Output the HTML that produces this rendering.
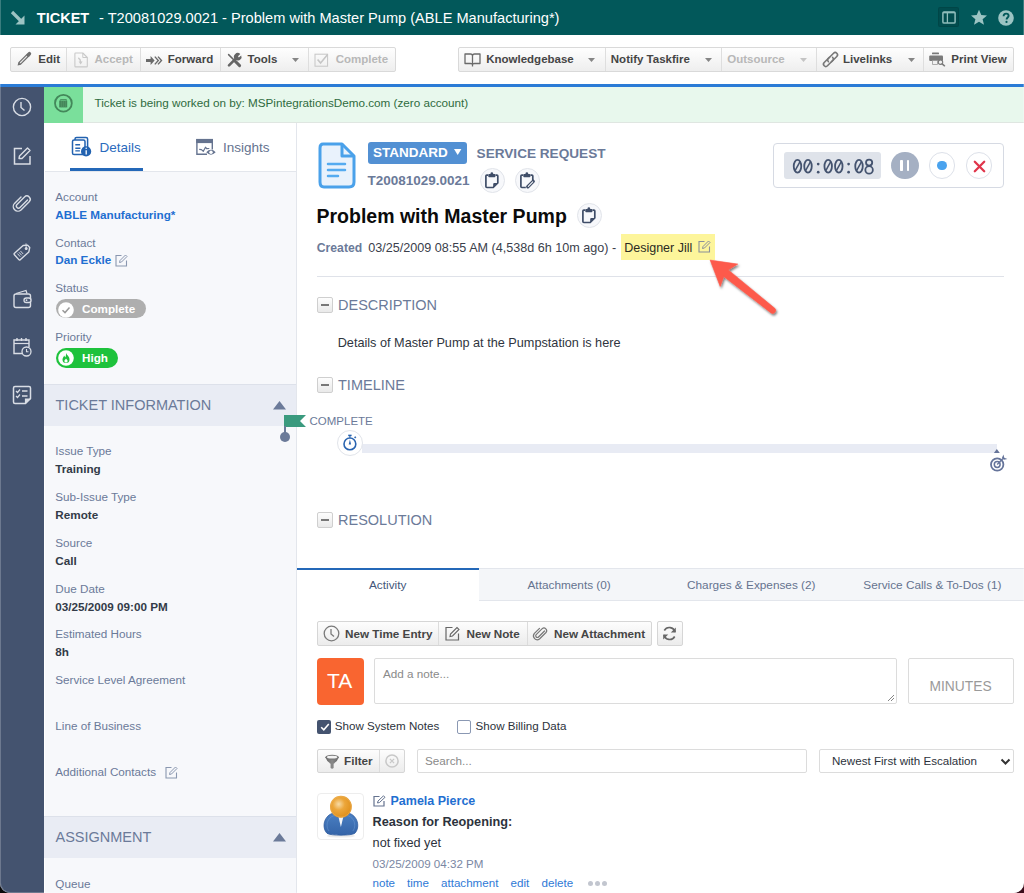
<!DOCTYPE html><html><head><meta charset="utf-8"><style>
html,body{margin:0;padding:0;width:1024px;height:893px;overflow:hidden;background:#0a0a0a;}
.a{position:absolute;}
.t{position:absolute;white-space:nowrap;line-height:1;font-family:"Liberation Sans",sans-serif;}
svg.a{overflow:visible;}
</style></head><body>
<div class="a" style="left:0px;top:0px;width:1024px;height:893px;background:linear-gradient(90deg,#0a0a0a 0%,#0a0a0a 90%,#3a0c1a 100%);"></div>
<div class="a" style="left:0;top:0;width:1024px;height:893px;background:#fff;border-radius:0 0 10px 10px;overflow:hidden;" id="win">
<div class="a" style="left:0px;top:0px;width:1024px;height:35px;background:#02585a;"></div>
<svg class="a" style="left:9px;top:9px;" width="18" height="18" viewBox="0 0 18 18"><path d="M3 3 L13 13" stroke="#9cc4c3" stroke-width="3.2" fill="none"/><path d="M15.5 6.5 L15.5 15.5 L6.5 15.5 Z" fill="#9cc4c3"/></svg>
<div class="t" style="left:36.8px;top:11.00px;font-size:14.5px;font-weight:bold;color:#fff;">TICKET</div>
<div class="t" style="left:99.0px;top:11.00px;font-size:14.6px;color:#fff;">- T20081029.0021 - Problem with Master Pump (ABLE Manufacturing*)</div>
<div class="a" style="left:938.4px;top:7.3px;width:21.1px;height:20.2px;background:#014c4e;border-radius:2px;box-shadow:inset 0 0 0 1px rgba(0,0,0,0.08);"></div>
<svg class="a" style="left:942px;top:11.3px;" width="14" height="13" viewBox="0 0 14 13"><rect x="0.9" y="0.9" width="12.2" height="11.2" rx="1.2" stroke="#8fbcbb" stroke-width="1.5" fill="none"/><path d="M0.9 1.6 L13.1 1.6" stroke="#8fbcbb" stroke-width="1.5"/><path d="M5.4 1 L5.4 12" stroke="#8fbcbb" stroke-width="1.3"/></svg>
<svg class="a" style="left:970px;top:9px;" width="18" height="17" viewBox="0 0 18 17"><path d="M9 0.8 L11.3 6.1 L17 6.5 L12.6 10.2 L14 15.8 L9 12.8 L4 15.8 L5.4 10.2 L1 6.5 L6.7 6.1 Z" fill="#9cc4c3"/></svg>
<svg class="a" style="left:998px;top:10px;" width="16" height="16" viewBox="0 0 16 16"><circle cx="8" cy="8" r="7.8" fill="#9cc4c3"/><path d="M5.6 6.2 C5.6 4.4 6.8 3.6 8.1 3.6 C9.6 3.6 10.6 4.5 10.6 5.8 C10.6 7.4 8.6 7.6 8.6 9.4" stroke="#02585a" stroke-width="1.9" fill="none"/><circle cx="8.5" cy="11.9" r="1.1" fill="#02585a"/></svg>
<div class="a" style="left:10px;top:47px;width:385.5px;height:24.5px;box-sizing:border-box;border:1px solid #d9d9d9;border-radius:2px;background:linear-gradient(#fefefe,#eeeeee);"></div>
<div class="a" style="left:66px;top:48px;width:1px;height:22.5px;background:#dedede;"></div>
<div class="a" style="left:139.5px;top:48px;width:1px;height:22.5px;background:#dedede;"></div>
<div class="a" style="left:220px;top:48px;width:1px;height:22.5px;background:#dedede;"></div>
<div class="a" style="left:307.5px;top:48px;width:1px;height:22.5px;background:#dedede;"></div>
<div class="a" style="left:457.5px;top:47px;width:556.5px;height:24.5px;box-sizing:border-box;border:1px solid #d9d9d9;border-radius:2px;background:linear-gradient(#fefefe,#eeeeee);"></div>
<div class="a" style="left:604.5px;top:48px;width:1px;height:22.5px;background:#dedede;"></div>
<div class="a" style="left:721px;top:48px;width:1px;height:22.5px;background:#dedede;"></div>
<div class="a" style="left:816px;top:48px;width:1px;height:22.5px;background:#dedede;"></div>
<div class="a" style="left:923px;top:48px;width:1px;height:22.5px;background:#dedede;"></div>
<div class="t" style="left:38.3px;top:54.00px;font-size:11.5px;font-weight:bold;color:#454545;">Edit</div>
<div class="t" style="left:94.5px;top:54.00px;font-size:11.5px;font-weight:bold;color:#b8b8b8;">Accept</div>
<div class="t" style="left:167.8px;top:54.00px;font-size:11.5px;font-weight:bold;color:#454545;">Forward</div>
<div class="t" style="left:247.6px;top:54.00px;font-size:11.5px;font-weight:bold;color:#454545;">Tools</div>
<div class="t" style="left:335.7px;top:54.00px;font-size:11.5px;font-weight:bold;color:#b8b8b8;">Complete</div>
<div class="t" style="left:486.2px;top:54.00px;font-size:11.5px;font-weight:bold;color:#454545;">Knowledgebase</div>
<div class="t" style="left:610.8px;top:54.00px;font-size:11.5px;font-weight:bold;color:#454545;">Notify Taskfire</div>
<div class="t" style="left:727.2px;top:54.00px;font-size:11.5px;font-weight:bold;color:#b8b8b8;">Outsource</div>
<div class="t" style="left:843.0px;top:54.00px;font-size:11.5px;font-weight:bold;color:#454545;">Livelinks</div>
<div class="t" style="left:951.3px;top:54.00px;font-size:11.5px;font-weight:bold;color:#454545;">Print View</div>
<svg class="a" style="left:292.1px;top:57.6px;" width="7" height="4" viewBox="0 0 7 4"><path d="M0 0 L7 0 L3.5 4 Z" fill="#858585"/></svg>
<svg class="a" style="left:588.4px;top:57.6px;" width="7" height="4" viewBox="0 0 7 4"><path d="M0 0 L7 0 L3.5 4 Z" fill="#858585"/></svg>
<svg class="a" style="left:705.4px;top:57.6px;" width="7" height="4" viewBox="0 0 7 4"><path d="M0 0 L7 0 L3.5 4 Z" fill="#858585"/></svg>
<svg class="a" style="left:799.9px;top:57.6px;" width="7" height="4" viewBox="0 0 7 4"><path d="M0 0 L7 0 L3.5 4 Z" fill="#c4c4c4"/></svg>
<svg class="a" style="left:907.5px;top:57.6px;" width="7" height="4" viewBox="0 0 7 4"><path d="M0 0 L7 0 L3.5 4 Z" fill="#858585"/></svg>
<svg class="a" style="left:17px;top:52px;" width="15" height="15" viewBox="0 0 15 15"><path d="M2.6 11.5 L11.4 2.7" stroke="#6e6e6e" stroke-width="3.5"/><path d="M3.1 11 L10.9 3.2" stroke="#e9e9e9" stroke-width="1.1"/><path d="M0.6 13.6 L1.4 10 L4.2 12.8 Z" fill="#6e6e6e"/><path d="M11.2 2.9 L12.4 1.7" stroke="#6e6e6e" stroke-width="3.6" stroke-linecap="round"/></svg>
<svg class="a" style="left:74px;top:51.5px;" width="14" height="16" viewBox="0 0 14 16"><path d="M1.6 1 L8.8 1 L13.3 5.5 L13.3 14.2 Q13.3 14.9 12.6 14.9 L1.6 14.9 Q0.9 14.9 0.9 14.2 L0.9 1.7 Q0.9 1 1.6 1 Z" stroke="#c9c9c9" stroke-width="1.1" fill="none" stroke-linejoin="round"/><path d="M8.8 1 L8.8 5.5 L13.3 5.5" stroke="#c9c9c9" stroke-width="1" fill="none"/><path d="M4.3 5.8 Q6.6 7 6.6 10" stroke="#c9c9c9" stroke-width="1.4" fill="none"/><path d="M4.6 9.4 L8.6 9.4 L6.6 12.4 Z" fill="#c9c9c9"/></svg>
<svg class="a" style="left:146px;top:56px;" width="16" height="9" viewBox="0 0 16 9"><path d="M0 3 L4.6 3 L4.6 0 L8.6 4.5 L4.6 9 L4.6 6 L0 6 Z" fill="#6a6a6a"/><path d="M8.8 0.6 L12.3 4.5 L8.8 8.4 M12 0.6 L15.5 4.5 L12 8.4" stroke="#6a6a6a" stroke-width="1.4" fill="none"/></svg>
<svg class="a" style="left:226.5px;top:52.5px;" width="15" height="14" viewBox="0 0 15 14"><path d="M2 12.3 L8.5 5.8" stroke="#666" stroke-width="2.6" stroke-linecap="round"/><path d="M8.2 6.5 A3.6 3.6 0 0 1 13.3 1 L11 3.2 L11.8 4.4 L14.2 2.4 A3.6 3.6 0 0 1 9.8 7.3 Z" fill="#666"/><path d="M1.6 1.6 L7.2 7.2" stroke="#666" stroke-width="1.5" stroke-linecap="round"/><path d="M7.5 7.5 L12.6 12.6" stroke="#666" stroke-width="3" stroke-linecap="round"/></svg>
<svg class="a" style="left:313.5px;top:52.5px;" width="16" height="14" viewBox="0 0 16 14"><rect x="1" y="1.2" width="12.6" height="12" stroke="#c6c6c6" stroke-width="1" fill="none"/><path d="M3.6 6.4 L6.6 10 L13.6 1.6" stroke="#c6c6c6" stroke-width="1.6" fill="none"/></svg>
<svg class="a" style="left:464px;top:52.5px;" width="17" height="14" viewBox="0 0 17 14"><path d="M1 1 L6.5 1 Q8.5 1 8.5 3 L8.5 11.5 Q8.5 10.5 6.5 10.5 L1 10.5 Z M16 1 L10.5 1 Q8.5 1 8.5 3 L8.5 11.5 Q8.5 10.5 10.5 10.5 L16 10.5 Z" stroke="#6a6a6a" stroke-width="1.3" fill="none" stroke-linejoin="round"/><path d="M8.5 11.5 L8.5 13.5" stroke="#6a6a6a" stroke-width="1.3"/></svg>
<svg class="a" style="left:822.5px;top:51.5px;" width="15" height="15" viewBox="0 0 15 15"><g transform="translate(7.5,7.5) rotate(-45)"><path d="M0.8 -2.3 L-6.6 -2.3 A2.3 2.3 0 0 0 -6.6 2.3 L1.4 2.3 A2.3 2.3 0 0 0 3 0" stroke="#777" stroke-width="1.6" fill="none" stroke-linecap="round"/><path d="M-0.8 2.3 L6.6 2.3 A2.3 2.3 0 0 0 6.6 -2.3 L-1.4 -2.3 A2.3 2.3 0 0 0 -3 0" stroke="#777" stroke-width="1.6" fill="none" stroke-linecap="round"/></g></svg>
<svg class="a" style="left:929px;top:51px;" width="17" height="16" viewBox="0 0 17 16"><rect x="3" y="1.5" width="7" height="1.8" rx="0.6" fill="#7a7a7a"/><rect x="0.2" y="4.6" width="13.8" height="5.4" rx="1" fill="#7a7a7a"/><rect x="3.6" y="9.6" width="4.8" height="3.8" fill="#f0f0f0" stroke="#9a9a9a" stroke-width="0.8"/><circle cx="11.5" cy="11.2" r="2.2" stroke="#7a7a7a" stroke-width="1.1" fill="#f0f0f0"/><path d="M13.1 12.8 L15.5 14.8" stroke="#7a7a7a" stroke-width="1.5" stroke-linecap="round"/></svg>
<div class="a" style="left:0px;top:84px;width:1024px;height:3px;background:#2a7bd6;"></div>
<div class="a" style="left:0px;top:87px;width:44px;height:806px;background:#44536f;"></div>
<svg class="a" style="left:12px;top:97px;" width="20" height="20" viewBox="0 0 20 20"><circle cx="10" cy="10" r="8.6" stroke="#d9dde5" stroke-width="1.4" fill="none"/><path d="M9 5 L9 10.5 L12.5 13.5" stroke="#d9dde5" stroke-width="1.4" fill="none"/></svg>
<svg class="a" style="left:12px;top:146px;" width="20" height="20" viewBox="0 0 20 20"><path d="M10 2.5 L2.5 2.5 L2.5 18 L18 18 L18 10" stroke="#d9dde5" stroke-width="1.5" fill="none"/><path d="M7 12.5 L7.5 10 L15.5 2 L18 4.5 L10 12.5 Z" stroke="#d9dde5" stroke-width="1.4" fill="none" stroke-linejoin="round"/></svg>
<svg class="a" style="left:12px;top:194px;" width="20" height="20" viewBox="0 0 20 20"><path d="M15.5 6 L8 13.5 A2 2 0 0 1 5 10.5 L12.5 3 A3.3 3.3 0 0 1 17.2 7.7 L9 15.9 A4.6 4.6 0 0 1 2.5 9.4 L9 3" stroke="#d9dde5" stroke-width="1.4" fill="none" stroke-linecap="round"/></svg>
<svg class="a" style="left:12px;top:242px;" width="20" height="20" viewBox="0 0 20 20"><g transform="translate(11,9.4) rotate(-42)"><path d="M-7.6 -4.3 Q-8.6 -4.3 -8.6 -3.3 L-8.6 3.3 Q-8.6 4.3 -7.6 4.3 L4 4.3 L7.6 1.6 L7.6 -1.6 L4 -4.3 Z" stroke="#d9dde5" stroke-width="1.4" fill="none" stroke-linejoin="round"/><circle cx="4.3" cy="0" r="1.5" fill="#d9dde5"/><path d="M-5.6 -2.1 L-5.6 2.1 M-3.6 -2.1 L-3.6 2.1 M-1.6 -2.1 L-1.6 2.1" stroke="#d9dde5" stroke-width="0.9"/></g><path d="M14.2 6.5 L14 1.4" stroke="#d9dde5" stroke-width="0.9"/></svg>
<svg class="a" style="left:12px;top:289px;" width="20" height="20" viewBox="0 0 20 20"><rect x="2" y="5" width="16.5" height="13.5" rx="2" stroke="#d9dde5" stroke-width="1.4" fill="none"/><path d="M4 4.5 L14 1.5 L15 4.5" stroke="#d9dde5" stroke-width="1.3" fill="none"/><rect x="12" y="9" width="7" height="4.5" rx="2.2" stroke="#d9dde5" stroke-width="1.3" fill="#44536f"/><circle cx="14.5" cy="11.2" r="0.9" fill="#d9dde5"/></svg>
<svg class="a" style="left:12px;top:337px;" width="20" height="20" viewBox="0 0 20 20"><path d="M11 16.5 L2 16.5 L2 3 L17 3 L17 10" stroke="#d9dde5" stroke-width="1.4" fill="none"/><path d="M2 6.5 L17 6.5" stroke="#d9dde5" stroke-width="1.2"/><path d="M5 1 L5 4 M9.5 1 L9.5 4 M14 1 L14 4" stroke="#d9dde5" stroke-width="1.4"/><circle cx="14.5" cy="14.5" r="4.5" stroke="#d9dde5" stroke-width="1.3" fill="#44536f"/><path d="M14.5 12 L14.5 14.7 L16.5 14.7" stroke="#d9dde5" stroke-width="1.1" fill="none"/></svg>
<svg class="a" style="left:12px;top:385px;" width="20" height="20" viewBox="0 0 20 20"><path d="M3 1.5 L17 1.5 Q18.5 1.5 18.5 3 L18.5 13.5 L13.5 18.5 L3 18.5 Q1.5 18.5 1.5 17 L1.5 3 Q1.5 1.5 3 1.5 Z" stroke="#d9dde5" stroke-width="1.5" fill="none"/><path d="M13.5 18.5 L13.5 14 L18.5 14" stroke="#d9dde5" stroke-width="1.2" fill="#d9dde5"/><path d="M4 6 L5.5 7.5 L8 4.5 M4 11 L5.5 12.5 L8 9.5" stroke="#d9dde5" stroke-width="1.2" fill="none"/><path d="M10 6 L15.5 6 M10 11 L15.5 11" stroke="#d9dde5" stroke-width="1.4"/></svg>
<div class="a" style="left:44px;top:87px;width:980px;height:36px;background:#e8f8ed;border-bottom:1px solid #dfe6e1;box-sizing:border-box;"></div>
<div class="a" style="left:44px;top:87px;width:39px;height:36px;background:#7adf9b;"></div>
<svg class="a" style="left:53px;top:93px;" width="21" height="21" viewBox="0 0 21 21"><circle cx="10.4" cy="10.2" r="8.4" stroke="#43875a" stroke-width="1.8" fill="none"/><rect x="6.2" y="7.6" width="8" height="6.8" fill="#43875a"/><path d="M8.6 7.6 L8.6 14.4 M10.6 7.6 L10.6 14.4 M12.4 7.6 L12.4 14.4" stroke="#5d9f72" stroke-width="0.45"/><path d="M7.4 7.6 L7.4 6.6 L13.4 6.6 L13.4 7.6" stroke="#43875a" stroke-width="0.9" fill="none"/></svg>
<div class="t" style="left:94.5px;top:97.00px;font-size:11.7px;color:#2f6b40;">Ticket is being worked on by: MSPintegrationsDemo.com (zero account)</div>
<div class="a" style="left:44px;top:123px;width:252px;height:770px;background:#f7f8fb;border-right:1px solid #e3e6ec;box-sizing:content-box;"></div>
<div class="a" style="left:44px;top:123px;width:252px;height:48px;background:#fff;border-bottom:1px solid #e3e6ec;"></div>
<div class="a" style="left:70px;top:168px;width:73px;height:3px;background:#2468b8;"></div>
<svg class="a" style="left:71px;top:136px;" width="21" height="21" viewBox="0 0 21 21"><rect x="4" y="1.5" width="12.6" height="12" rx="1.6" stroke="#2262b0" stroke-width="1.5" fill="#fff"/><rect x="1.5" y="4" width="12.5" height="14.6" rx="1.6" stroke="#2262b0" stroke-width="1.5" fill="#fff"/><path d="M4.3 8.8 L9.1 8.8 M4.3 12.2 L9.4 12.2 M4.3 14.9 L8.9 14.9" stroke="#2262b0" stroke-width="1.4"/><circle cx="15.1" cy="15.4" r="5.1" fill="#2262b0"/><path d="M15.2 14.3 L15.2 18.5" stroke="#fff" stroke-width="1.3"/><circle cx="15.2" cy="12.3" r="0.75" fill="#fff"/></svg>
<div class="t" style="left:99.5px;top:141.00px;font-size:13.5px;color:#2a6bbd;">Details</div>
<svg class="a" style="left:196px;top:138px;" width="21" height="19" viewBox="0 0 21 19"><rect x="0.2" y="0.9" width="16.8" height="4.2" fill="#65738f"/><path d="M0.9 1 L0.9 16.2 L11 16.2 M16.3 1 L16.3 11.6" stroke="#65738f" stroke-width="1.4" fill="none"/><path d="M3.2 11.4 L5.4 11.6 L7.3 13.3 L9.5 9.2 L10.6 10.6 L13.3 10.5" stroke="#65738f" stroke-width="1.2" fill="none" stroke-linejoin="round"/><path d="M10.2 14.2 Q15 9.3 19.7 14.2 Q15 19.1 10.2 14.2 Z" fill="#65738f"/><circle cx="15" cy="14.2" r="1.7" fill="#fff"/></svg>
<div class="t" style="left:223.0px;top:141.00px;font-size:13.5px;color:#65738f;">Insights</div>
<div class="a" style="left:44px;top:171px;width:1px;height:722px;background:#fff;"></div>
<div class="t" style="left:55.3px;top:191.00px;font-size:11.7px;color:#6b7a99;">Account</div>
<div class="t" style="left:55.3px;top:209.00px;font-size:11.7px;font-weight:bold;color:#1f6fd1;">ABLE Manufacturing*</div>
<div class="t" style="left:55.3px;top:237.00px;font-size:11.7px;color:#6b7a99;">Contact</div>
<div class="t" style="left:55.3px;top:254.00px;font-size:11.7px;font-weight:bold;color:#1f6fd1;">Dan Eckle</div>
<svg class="a" style="left:115px;top:254px;" width="13" height="13" viewBox="0 0 13 13"><path d="M6.5 1.5 L1 1.5 L1 12 L11.5 12 L11.5 6.5" stroke="#8a97b0" stroke-width="1.1" fill="none"/><path d="M4.5 8.5 L5 6.5 L10.5 1 L12 2.5 L6.5 8 Z" stroke="#8a97b0" stroke-width="1" fill="none"/></svg>
<div class="t" style="left:55.3px;top:282.00px;font-size:11.7px;color:#6b7a99;">Status</div>
<div class="a" style="left:55.5px;top:299.2px;width:90px;height:19.3px;background:#aeaeae;border-radius:10px;"></div>
<svg class="a" style="left:57.5px;top:301.5px;" width="16" height="16" viewBox="0 0 16 16"><circle cx="8" cy="8" r="7.8" fill="#fff"/><path d="M4.5 8.2 L7 10.6 L11.5 5.6" stroke="#9a9a9a" stroke-width="1.5" fill="none"/></svg>
<div class="t" style="left:82.0px;top:303.00px;font-size:11.7px;font-weight:bold;color:#fff;">Complete</div>
<div class="t" style="left:55.3px;top:331.00px;font-size:11.7px;color:#6b7a99;">Priority</div>
<div class="a" style="left:55.5px;top:348px;width:62.5px;height:19.5px;background:#1ec23c;border-radius:10px;"></div>
<svg class="a" style="left:57.5px;top:350px;" width="16" height="16" viewBox="0 0 16 16"><circle cx="8" cy="8" r="7.8" fill="#fff"/><path d="M8 3 C9 5.5 11.5 6.5 11.5 9.5 A3.5 3.5 0 0 1 4.5 9.5 C4.5 7.5 6 7 6 5.5 C7 6.5 7 7 7.3 7.5 C8 6 8 4.5 8 3 Z" fill="#1ec23c"/><path d="M8 8.5 C8.7 9.5 9.6 10 9.6 11 A1.6 1.6 0 0 1 6.4 11 C6.4 10 7.5 9.5 8 8.5 Z" fill="#fff"/></svg>
<div class="t" style="left:82.0px;top:352.00px;font-size:11.7px;font-weight:bold;color:#fff;">High</div>
<div class="a" style="left:44px;top:384px;width:252px;height:42px;background:#e9ecf4;border-top:1px solid #dde1ea;box-sizing:border-box;"></div>
<div class="t" style="left:55.5px;top:398.00px;font-size:14.5px;color:#6b7a99;">TICKET INFORMATION</div>
<svg class="a" style="left:273px;top:401px;" width="13" height="9" viewBox="0 0 13 9"><path d="M0 8.5 L6.5 0 L13 8.5 Z" fill="#6b7a99"/></svg>
<div class="t" style="left:55.3px;top:445.00px;font-size:11.7px;color:#6b7a99;">Issue Type</div>
<div class="t" style="left:55.3px;top:463.00px;font-size:11.7px;font-weight:bold;color:#333b48;">Training</div>
<div class="t" style="left:55.3px;top:491.00px;font-size:11.7px;color:#6b7a99;">Sub-Issue Type</div>
<div class="t" style="left:55.3px;top:509.00px;font-size:11.7px;font-weight:bold;color:#333b48;">Remote</div>
<div class="t" style="left:55.3px;top:537.00px;font-size:11.7px;color:#6b7a99;">Source</div>
<div class="t" style="left:55.3px;top:555.00px;font-size:11.7px;font-weight:bold;color:#333b48;">Call</div>
<div class="t" style="left:55.3px;top:583.00px;font-size:11.7px;color:#6b7a99;">Due Date</div>
<div class="t" style="left:55.3px;top:601.00px;font-size:11.7px;font-weight:bold;color:#333b48;">03/25/2009 09:00 PM</div>
<div class="t" style="left:55.3px;top:628.00px;font-size:11.7px;color:#6b7a99;">Estimated Hours</div>
<div class="t" style="left:55.3px;top:646.00px;font-size:11.7px;font-weight:bold;color:#333b48;">8h</div>
<div class="t" style="left:55.3px;top:674.00px;font-size:11.7px;color:#6b7a99;">Service Level Agreement</div>
<div class="t" style="left:55.3px;top:720.00px;font-size:11.7px;color:#6b7a99;">Line of Business</div>
<div class="t" style="left:55.3px;top:766.00px;font-size:11.7px;color:#6b7a99;">Additional Contacts</div>
<svg class="a" style="left:165px;top:766px;" width="13" height="13" viewBox="0 0 13 13"><path d="M6.5 1.5 L1 1.5 L1 12 L11.5 12 L11.5 6.5" stroke="#8a97b0" stroke-width="1.1" fill="none"/><path d="M4.5 8.5 L5 6.5 L10.5 1 L12 2.5 L6.5 8 Z" stroke="#8a97b0" stroke-width="1" fill="none"/></svg>
<div class="a" style="left:44px;top:816px;width:252px;height:42px;background:#e9ecf4;border-top:1px solid #dde1ea;box-sizing:border-box;"></div>
<div class="t" style="left:55.5px;top:830.00px;font-size:14.5px;color:#6b7a99;">ASSIGNMENT</div>
<svg class="a" style="left:273px;top:833px;" width="13" height="9" viewBox="0 0 13 9"><path d="M0 8.5 L6.5 0 L13 8.5 Z" fill="#6b7a99"/></svg>
<div class="t" style="left:55.3px;top:878.00px;font-size:11.7px;color:#6b7a99;">Queue</div>
<svg class="a" style="left:318px;top:142px;" width="39" height="47" viewBox="0 0 39 47"><path d="M5 2 L24 2 L36 14 L36 40 Q36 45 31 45 L6 45 Q2 45 2 40 L2 6 Q2 2 5 2 Z" fill="#e9f2fc" stroke="#4aa1ea" stroke-width="3" stroke-linejoin="round"/><path d="M24 2 L24 14 L36 14" fill="none" stroke="#4aa1ea" stroke-width="3" stroke-linejoin="round"/><path d="M10 22 L27 22 M10 28 L27 28 M10 34 L20 34" stroke="#55abf0" stroke-width="2.5" stroke-linecap="round"/></svg>
<div class="a" style="left:367.7px;top:142.3px;width:99.5px;height:21.5px;background:#5290d3;border-radius:3px;"></div>
<div class="t" style="left:373.0px;top:146.00px;font-size:13.5px;font-weight:bold;color:#fff;">STANDARD</div>
<svg class="a" style="left:453.6px;top:148.8px;" width="7.4" height="6" viewBox="0 0 7.4 6"><path d="M0 0 L7.4 0 L3.7 6 Z" fill="#fff"/></svg>
<div class="t" style="left:476.6px;top:147.00px;font-size:13.6px;font-weight:bold;color:#6b7a99;">SERVICE REQUEST</div>
<div class="t" style="left:367.5px;top:174.00px;font-size:13.5px;font-weight:bold;color:#6b7a99;">T20081029.0021</div>
<div class="a" style="left:479.9px;top:167.5px;width:25px;height:25px;box-sizing:border-box;border:1px solid #e1e4ea;border-radius:50%;background:#f7f8fb;"></div>
<svg class="a" style="left:484.0px;top:171.7px;" width="16" height="17" viewBox="0 0 16 17"><path d="M4.2 3.2 L2.8 3.2 Q1.9 3.2 1.9 4.1 L1.9 14.6 Q1.9 15.5 2.8 15.5 L9.2 15.5 L13.8 10.9 L13.8 4.1 Q13.8 3.2 12.9 3.2 L11.5 3.2" stroke="#3f4d68" stroke-width="1.7" fill="none" stroke-linejoin="round"/><rect x="4.3" y="1.9" width="7.1" height="3.3" rx="0.8" fill="#3f4d68"/><circle cx="7.85" cy="1.6" r="1.3" fill="#3f4d68"/><path d="M9.2 15.5 L9.2 12 Q9.2 10.9 10.3 10.9 L13.8 10.9 Z" fill="#3f4d68"/></svg>
<div class="a" style="left:515.0px;top:167.5px;width:25px;height:25px;box-sizing:border-box;border:1px solid #e1e4ea;border-radius:50%;background:#f7f8fb;"></div>
<svg class="a" style="left:519.1px;top:171.7px;" width="16" height="17" viewBox="0 0 16 17"><path d="M4.2 3.2 L2.8 3.2 Q1.9 3.2 1.9 4.1 L1.9 14.6 Q1.9 15.5 2.8 15.5 L6.8 15.5 M13.8 9.6 L13.8 4.1 Q13.8 3.2 12.9 3.2 L11.5 3.2" stroke="#3f4d68" stroke-width="1.7" fill="none" stroke-linejoin="round"/><rect x="4.3" y="1.9" width="7.1" height="3.3" rx="0.8" fill="#3f4d68"/><circle cx="7.85" cy="1.6" r="1.3" fill="#3f4d68"/><path d="M8.8 14.8 L14.2 9.4" stroke="#3f4d68" stroke-width="3.4" stroke-linecap="round"/><path d="M9.3 14.3 L13.7 9.9" stroke="#f7f8fb" stroke-width="1.1" stroke-linecap="round"/></svg>
<div class="a" style="left:576.5px;top:203.0px;width:25px;height:25px;box-sizing:border-box;border:1px solid #e1e4ea;border-radius:50%;background:#f7f8fb;"></div>
<svg class="a" style="left:580.6px;top:207.2px;" width="16" height="17" viewBox="0 0 16 17"><path d="M4.2 3.2 L2.8 3.2 Q1.9 3.2 1.9 4.1 L1.9 14.6 Q1.9 15.5 2.8 15.5 L9.2 15.5 L13.8 10.9 L13.8 4.1 Q13.8 3.2 12.9 3.2 L11.5 3.2" stroke="#3f4d68" stroke-width="1.7" fill="none" stroke-linejoin="round"/><rect x="4.3" y="1.9" width="7.1" height="3.3" rx="0.8" fill="#3f4d68"/><circle cx="7.85" cy="1.6" r="1.3" fill="#3f4d68"/><path d="M9.2 15.5 L9.2 12 Q9.2 10.9 10.3 10.9 L13.8 10.9 Z" fill="#3f4d68"/></svg>
<div class="t" style="left:316.5px;top:207.00px;font-size:19.5px;font-weight:bold;color:#0b0b0b;">Problem with Master Pump</div>
<div class="t" style="left:316.8px;top:242.00px;font-size:12.2px;font-weight:bold;color:#6b7a99;">Created</div>
<div class="t" style="left:368.3px;top:242.00px;font-size:12.6px;color:#3a404b;">03/25/2009 08:55 AM (4,538d 6h 10m ago) -</div>
<div class="a" style="left:621.2px;top:234px;width:93.8px;height:26px;background:#fdf59b;"></div>
<div class="t" style="left:624.2px;top:242.00px;font-size:12.5px;color:#2a2a22;">Designer Jill</div>
<svg class="a" style="left:697.5px;top:239.5px;" width="13" height="13" viewBox="0 0 13 13"><path d="M6.5 1.5 L1 1.5 L1 12 L11.5 12 L11.5 6.5" stroke="#8a8f9a" stroke-width="1.1" fill="none"/><path d="M4.5 8.5 L5 6.5 L10.5 1 L12 2.5 L6.5 8 Z" stroke="#8a8f9a" stroke-width="1" fill="none"/></svg>
<div class="a" style="left:317px;top:276px;width:687px;height:1px;background:#dfe2e9;"></div>
<div class="a" style="left:773.2px;top:142.6px;width:231px;height:45.7px;box-sizing:border-box;border:1.5px solid #d6dae3;border-radius:4px;background:#fff;"></div>
<div class="a" style="left:784px;top:152.3px;width:97.4px;height:26.4px;background:#dfe3ea;border-radius:3px;"></div>
<svg class="a" style="left:786px;top:152px;" width="94" height="28" viewBox="0 0 94 28"><ellipse cx="11.5" cy="14.25" rx="3.75" ry="6.45" stroke="#44536f" stroke-width="1.8" fill="none"/><path d="M9.1 18.6 L13.9 9.9" stroke="#44536f" stroke-width="1.5"/><ellipse cx="22" cy="14.25" rx="3.75" ry="6.45" stroke="#44536f" stroke-width="1.8" fill="none"/><path d="M19.6 18.6 L24.4 9.9" stroke="#44536f" stroke-width="1.5"/><ellipse cx="42.2" cy="14.25" rx="3.75" ry="6.45" stroke="#44536f" stroke-width="1.8" fill="none"/><path d="M39.800000000000004 18.6 L44.6 9.9" stroke="#44536f" stroke-width="1.5"/><ellipse cx="52.8" cy="14.25" rx="3.75" ry="6.45" stroke="#44536f" stroke-width="1.8" fill="none"/><path d="M50.4 18.6 L55.199999999999996 9.9" stroke="#44536f" stroke-width="1.5"/><ellipse cx="73" cy="14.25" rx="3.75" ry="6.45" stroke="#44536f" stroke-width="1.8" fill="none"/><path d="M70.6 18.6 L75.4 9.9" stroke="#44536f" stroke-width="1.5"/><ellipse cx="83.1" cy="10.6" rx="3.1" ry="3.0" stroke="#44536f" stroke-width="1.8" fill="none"/><ellipse cx="83.1" cy="17.9" rx="3.75" ry="3.7" stroke="#44536f" stroke-width="1.8" fill="none"/><circle cx="32.2" cy="12.1" r="1.35" fill="#44536f"/><circle cx="32.2" cy="20.2" r="1.35" fill="#44536f"/><circle cx="62.6" cy="12.1" r="1.35" fill="#44536f"/><circle cx="62.6" cy="20.2" r="1.35" fill="#44536f"/></svg>
<div class="a" style="left:891.3px;top:151.8px;width:27.4px;height:27.4px;background:#a5b0c3;border-radius:50%;"></div>
<div class="a" style="left:900.4px;top:160.2px;width:2.9px;height:10.8px;background:#fff;border-radius:0.8px;"></div>
<div class="a" style="left:906.6px;top:160.2px;width:2.9px;height:10.8px;background:#fff;border-radius:0.8px;"></div>
<div class="a" style="left:928.9px;top:152.2px;width:26.6px;height:26.6px;box-sizing:border-box;border:1.5px solid #dde1e9;border-radius:50%;background:#fff;"></div>
<div class="a" style="left:937.4px;top:160.9px;width:9.2px;height:9.2px;background:#4aa3ee;border-radius:50%;"></div>
<div class="a" style="left:965.7px;top:152.2px;width:26.6px;height:26.6px;box-sizing:border-box;border:1.5px solid #dde1e9;border-radius:50%;background:#fff;"></div>
<svg class="a" style="left:972.5px;top:159.5px;" width="13" height="13" viewBox="0 0 13 13"><path d="M1.8 1.8 L11.2 11.2 M11.2 1.8 L1.8 11.2" stroke="#e0354b" stroke-width="2.3" stroke-linecap="round"/></svg>
<div class="a" style="left:317px;top:297px;width:16px;height:16px;box-sizing:border-box;border:1px solid #cfcfcf;border-radius:2px;background:linear-gradient(#fdfdfd,#e9e9e9);"></div>
<div class="a" style="left:321px;top:304px;width:8px;height:2px;background:#777;"></div>
<div class="t" style="left:338.0px;top:298.00px;font-size:14.5px;color:#6b7a99;">DESCRIPTION</div>
<div class="t" style="left:337.7px;top:337.00px;font-size:12.7px;color:#2f3540;">Details of Master Pump at the Pumpstation is here</div>
<div class="a" style="left:317px;top:377px;width:16px;height:16px;box-sizing:border-box;border:1px solid #cfcfcf;border-radius:2px;background:linear-gradient(#fdfdfd,#e9e9e9);"></div>
<div class="a" style="left:321px;top:384px;width:8px;height:2px;background:#777;"></div>
<div class="t" style="left:338.0px;top:378.00px;font-size:14.5px;color:#6b7a99;">TIMELINE</div>
<div class="a" style="left:317px;top:512px;width:16px;height:16px;box-sizing:border-box;border:1px solid #cfcfcf;border-radius:2px;background:linear-gradient(#fdfdfd,#e9e9e9);"></div>
<div class="a" style="left:321px;top:519px;width:8px;height:2px;background:#777;"></div>
<div class="t" style="left:338.0px;top:513.00px;font-size:14.5px;color:#6b7a99;">RESOLUTION</div>
<svg class="a" style="left:283px;top:414px;" width="24" height="14" viewBox="0 0 24 14"><path d="M1 1 L23 1 L17 7 L23 13 L1 13 Z" fill="#3a9a7e"/></svg>
<div class="a" style="left:284.1px;top:426px;width:1.5px;height:7px;background:#6b7a99;"></div>
<div class="a" style="left:279.8px;top:431.9px;width:9.8px;height:9.8px;background:#6b7a99;border-radius:50%;"></div>
<div class="t" style="left:309.5px;top:416.00px;font-size:11.5px;color:#6b7a99;">COMPLETE</div>
<div class="a" style="left:362px;top:444px;width:635px;height:9px;background:#e8ebf4;"></div>
<div class="a" style="left:336.6px;top:430px;width:26px;height:26px;box-sizing:border-box;border:1px solid #e1e4ea;border-radius:50%;background:#fff;"></div>
<svg class="a" style="left:341.5px;top:433px;" width="16" height="18" viewBox="0 0 16 18"><circle cx="7.9" cy="10.9" r="5.9" stroke="#2a64b0" stroke-width="1.6" fill="none"/><path d="M6.2 2.4 L9.6 2.4" stroke="#2a64b0" stroke-width="1.5"/><path d="M7.9 2.6 L7.9 4.8" stroke="#2a64b0" stroke-width="1.2"/><path d="M12.6 4.9 L13.8 3.7" stroke="#2a64b0" stroke-width="1.6"/><path d="M7.9 6.4 L9.1 11.4 L6.7 11.4 Z" fill="#2a64b0"/></svg>
<svg class="a" style="left:985px;top:445px;" width="24" height="28" viewBox="0 0 24 28"><path d="M11.8 4.1 L14.8 7.9 L8.9 7.9 Z" fill="#65749a"/><circle cx="12.2" cy="19.5" r="6.2" stroke="#65749a" stroke-width="1.8" fill="none"/><circle cx="12.2" cy="19.5" r="2.9" stroke="#65749a" stroke-width="1.5" fill="none"/><path d="M12.2 19.5 L18 13.6" stroke="#65749a" stroke-width="1.4"/><path d="M18.4 9.6 L19.3 12.7 L22.4 13.9 L18.9 14.8 L16.9 12.9 Z" fill="#65749a"/></svg>
<div class="a" style="left:297px;top:568px;width:727px;height:33px;background:#f4f6f9;border-top:1px solid #e3e6ec;border-bottom:1px solid #e3e6ec;box-sizing:border-box;"></div>
<div class="a" style="left:297px;top:568px;width:182px;height:34px;background:#fff;border-top:2px solid #2468b8;box-sizing:border-box;"></div>
<div class="t" style="left:369.0px;top:580.00px;font-size:11.8px;color:#44577a;">Activity</div>
<div class="t" style="left:527.5px;top:580.00px;font-size:11.8px;color:#65738f;">Attachments (0)</div>
<div class="t" style="left:687.0px;top:580.00px;font-size:11.8px;color:#65738f;">Charges &amp; Expenses (2)</div>
<div class="t" style="left:863.3px;top:580.00px;font-size:11.8px;color:#65738f;">Service Calls &amp; To-Dos (1)</div>
<div class="a" style="left:317px;top:621px;width:335px;height:25px;box-sizing:border-box;border:1px solid #d6d6d6;border-radius:2px;background:linear-gradient(#fdfdfd,#ececec);"></div>
<div class="a" style="left:438px;top:622px;width:1px;height:23px;background:#dcdcdc;"></div>
<div class="a" style="left:526.5px;top:622px;width:1px;height:23px;background:#dcdcdc;"></div>
<div class="a" style="left:657.4px;top:621px;width:25.200000000000045px;height:25px;box-sizing:border-box;border:1px solid #d6d6d6;border-radius:2px;background:linear-gradient(#fdfdfd,#ececec);"></div>
<div class="t" style="left:345.0px;top:628.00px;font-size:11.7px;font-weight:bold;color:#454545;">New Time Entry</div>
<div class="t" style="left:466.5px;top:628.00px;font-size:11.7px;font-weight:bold;color:#454545;">New Note</div>
<div class="t" style="left:554.0px;top:628.00px;font-size:11.7px;font-weight:bold;color:#454545;">New Attachment</div>
<svg class="a" style="left:323px;top:625px;" width="17" height="17" viewBox="0 0 17 17"><circle cx="8.5" cy="8.5" r="7.3" stroke="#7a7a7a" stroke-width="1.3" fill="none"/><path d="M8 4 L8 9 L11 11.5" stroke="#7a7a7a" stroke-width="1.3" fill="none"/></svg>
<svg class="a" style="left:445px;top:626px;" width="15" height="15" viewBox="0 0 15 15"><path d="M7.5 1.5 L1 1.5 L1 14 L13.5 14 L13.5 7.5" stroke="#666" stroke-width="1.2" fill="none"/><path d="M5 10.5 L5.5 8 L12 1.5 L14 3.5 L7.5 10 Z" stroke="#666" stroke-width="1.1" fill="none"/></svg>
<svg class="a" style="left:533px;top:626px;" width="15" height="16" viewBox="0 0 15 16"><path d="M11.5 5 L5.5 11 A1.6 1.6 0 0 1 3.2 8.7 L9.2 2.7 A2.7 2.7 0 0 1 13 6.5 L6.5 13 A3.8 3.8 0 0 1 1.2 7.7 L6.5 2.4" stroke="#777" stroke-width="1.2" fill="none" stroke-linecap="round"/></svg>
<svg class="a" style="left:661px;top:625px;" width="17" height="17" viewBox="0 0 17 17"><path d="M14 7 A5.8 5.8 0 0 0 3.3 5.5 M3 10 A5.8 5.8 0 0 0 13.7 11.5" stroke="#666" stroke-width="1.6" fill="none"/><path d="M14.8 2.5 L14.8 7.6 L9.8 7.6 Z M2.2 14.5 L2.2 9.4 L7.2 9.4 Z" fill="#666"/></svg>
<div class="a" style="left:317.2px;top:658px;width:46.6px;height:46.8px;background:#f96530;border-radius:4px;"></div>
<div class="t" style="left:327.0px;top:670.00px;font-size:21px;color:#fff;">TA</div>
<div class="a" style="left:373.7px;top:658.3px;width:523px;height:46px;box-sizing:border-box;border:1px solid #dcdcdc;border-radius:2px;background:#fff;"></div>
<div class="t" style="left:383.0px;top:668.00px;font-size:11.7px;color:#8a8a8a;">Add a note...</div>
<svg class="a" style="left:887px;top:694px;" width="8" height="8" viewBox="0 0 8 8"><path d="M1 7 L7 1 M4 7 L7 4" stroke="#777" stroke-width="0.9"/></svg>
<div class="a" style="left:907.5px;top:658.3px;width:106.5px;height:46px;box-sizing:border-box;border:1px solid #dcdcdc;border-radius:2px;background:#fff;"></div>
<div class="t" style="left:929.5px;top:680.00px;font-size:13.8px;color:#9a9a9a;">MINUTES</div>
<div class="a" style="left:317px;top:719.6px;width:14.4px;height:14.4px;background:#44536f;border-radius:2px;"></div>
<svg class="a" style="left:318.5px;top:721px;" width="12" height="12" viewBox="0 0 12 12"><path d="M2.2 6.2 L4.8 8.8 L9.8 3" stroke="#fff" stroke-width="1.6" fill="none"/></svg>
<div class="t" style="left:334.8px;top:720.00px;font-size:11.6px;color:#2c323c;">Show System Notes</div>
<div class="a" style="left:457.3px;top:719.6px;width:14.2px;height:14.2px;box-sizing:border-box;border:1px solid #8a98b3;border-radius:2px;background:#fff;"></div>
<div class="t" style="left:475.5px;top:720.00px;font-size:11.6px;color:#2c323c;">Show Billing Data</div>
<div class="a" style="left:317px;top:749.2px;width:87.60000000000002px;height:24.199999999999932px;box-sizing:border-box;border:1px solid #d6d6d6;border-radius:2px;background:linear-gradient(#fdfdfd,#ececec);"></div>
<div class="a" style="left:379.2px;top:750.2px;width:1px;height:22.199999999999932px;background:#dcdcdc;"></div>
<svg class="a" style="left:324.5px;top:753.5px;" width="15" height="16" viewBox="0 0 15 16"><defs><linearGradient id="fg" x1="0" y1="0" x2="1" y2="0"><stop offset="0" stop-color="#666"/><stop offset="0.5" stop-color="#8a8a8a"/><stop offset="1" stop-color="#666"/></linearGradient></defs><path d="M0.4 3.2 Q1.6 7.4 5.6 9.8 L5.6 14 Q7.1 15.3 8.6 14 L8.6 9.8 Q12.6 7.4 13.8 3.2 Z" fill="url(#fg)"/><ellipse cx="7.1" cy="3.2" rx="6.7" ry="2.5" fill="#777"/><ellipse cx="7.1" cy="3.2" rx="5.2" ry="1.4" fill="#f2f2f2"/></svg>
<div class="t" style="left:344.0px;top:755.00px;font-size:11.7px;font-weight:bold;color:#454545;">Filter</div>
<svg class="a" style="left:384.8px;top:754.4px;" width="14" height="14" viewBox="0 0 14 14"><circle cx="7" cy="7" r="6.1" stroke="#c8c8c8" stroke-width="1.5" fill="none"/><path d="M4.9 4.9 L9.1 9.1 M9.1 4.9 L4.9 9.1" stroke="#c8c8c8" stroke-width="1.3"/></svg>
<div class="a" style="left:416.6px;top:749.2px;width:390.4px;height:24.2px;box-sizing:border-box;border:1px solid #dcdcdc;border-radius:2px;background:#fff;"></div>
<div class="t" style="left:425.0px;top:755.00px;font-size:11.7px;color:#8a8a8a;">Search...</div>
<div class="a" style="left:819.3px;top:749.2px;width:194.7px;height:24.2px;box-sizing:border-box;border:1px solid #dcdcdc;border-radius:2px;background:#fff;"></div>
<div class="t" style="left:832.0px;top:755.00px;font-size:11.6px;color:#2c323c;">Newest First with Escalation</div>
<svg class="a" style="left:1000px;top:758px;" width="11" height="8" viewBox="0 0 11 8"><path d="M1.5 1.5 L5.5 5.5 L9.5 1.5" stroke="#333" stroke-width="2" fill="none"/></svg>
<div class="a" style="left:316.7px;top:793px;width:47.4px;height:47.4px;box-sizing:border-box;border:1px solid #ededed;border-radius:4px;background:#fff;"></div>
<svg class="a" style="left:322px;top:796px;" width="38" height="42" viewBox="0 0 38 42"><defs><radialGradient id="hg" cx="0.4" cy="0.38" r="0.62"><stop offset="0" stop-color="#f7dba6"/><stop offset="0.45" stop-color="#eca63a"/><stop offset="1" stop-color="#e0901c"/></radialGradient><linearGradient id="bg" x1="0" y1="0" x2="0" y2="1"><stop offset="0" stop-color="#4a7fc2"/><stop offset="1" stop-color="#3464a8"/></linearGradient></defs><ellipse cx="18.9" cy="40" rx="14" ry="1.6" fill="#000" opacity="0.08"/><path d="M5 37.3 C1.2 33.5 1.2 26.5 4.2 22.2 C6.2 19.2 9.2 17 13 17 L24.8 17 C28.6 17 31.6 19.2 33.6 22.2 C36.6 26.5 36.6 33.5 32.8 37.3 C29.8 39.8 8 39.8 5 37.3 Z" fill="url(#bg)" stroke="#2e5c9e" stroke-width="0.8"/><path d="M7 35 C4.5 32 4.5 27 6.5 24 C8 21.5 10.5 19.5 13.5 19.5 M24.3 19.5 C27.3 19.5 29.8 21.5 31.3 24 C33.3 27 33.3 32 30.8 35" stroke="#6f9bd3" stroke-width="0.7" fill="none" opacity="0.7"/><path d="M15.8 18 L18.9 31 L22 18 Z" fill="#f4f6f9"/><circle cx="18.9" cy="10.75" r="10.9" fill="url(#hg)"/><circle cx="18.9" cy="10.75" r="10.3" fill="none" stroke="#f2c278" stroke-width="0.6" opacity="0.6"/></svg>
<svg class="a" style="left:373.3px;top:794.8px;" width="13" height="12" viewBox="0 0 13 12"><path d="M6.5 1.5 L1 1.5 L1 11 L11 11 L11 6" stroke="#65738f" stroke-width="1.2" fill="none"/><path d="M4.5 8 L5 6 L10.5 0.8 L12 2.3 L6.5 7.5 Z" stroke="#65738f" stroke-width="1" fill="none"/></svg>
<div class="t" style="left:390.5px;top:795.00px;font-size:12.5px;font-weight:bold;color:#1f6fd1;">Pamela Pierce</div>
<div class="t" style="left:372.6px;top:816.00px;font-size:12.7px;font-weight:bold;color:#2c323c;">Reason for Reopening:</div>
<div class="t" style="left:372.6px;top:837.00px;font-size:12.7px;color:#2c323c;">not fixed yet</div>
<div class="t" style="left:372.6px;top:858.00px;font-size:11.6px;color:#7a87a3;">03/25/2009 04:32 PM</div>
<div class="t" style="left:372.5px;top:877.00px;font-size:11.6px;color:#2f79d6;">note</div>
<div class="t" style="left:407.0px;top:877.00px;font-size:11.6px;color:#2f79d6;">time</div>
<div class="t" style="left:441.0px;top:877.00px;font-size:11.6px;color:#2f79d6;">attachment</div>
<div class="t" style="left:510.5px;top:877.00px;font-size:11.6px;color:#2f79d6;">edit</div>
<div class="t" style="left:541.5px;top:877.00px;font-size:11.6px;color:#2f79d6;">delete</div>
<div class="a" style="left:587.5px;top:880.5px;width:5.5px;height:5.5px;background:#c2c6cf;border-radius:50%;"></div>
<div class="a" style="left:594.5px;top:880.5px;width:5.5px;height:5.5px;background:#c2c6cf;border-radius:50%;"></div>
<div class="a" style="left:601.5px;top:880.5px;width:5.5px;height:5.5px;background:#c2c6cf;border-radius:50%;"></div>
<svg class="a" style="left:700px;top:250px;" width="90" height="75" viewBox="0 0 90 75"><defs><filter id="sh" x="-20%" y="-20%" width="140%" height="140%"><feDropShadow dx="1.2" dy="1.8" stdDeviation="1.3" flood-color="#000" flood-opacity="0.5"/></filter></defs><path d="M10.1 10.1 L37.8 14.1 L28.3 19.9 L74.8 58.3 A3 3 0 0 1 71 62.9 L23.8 26.6 L20.2 36.5 Z" fill="#fd5a4b" filter="url(#sh)" stroke="#fd5a4b" stroke-width="0.6" stroke-linejoin="round"/></svg>
<div class="a" style="left:0;top:0;width:1024px;height:893px;box-sizing:border-box;border:1px solid rgba(255,255,255,0.22);border-top:none;border-radius:0 0 10px 10px;"></div>
</div>
</body></html>
